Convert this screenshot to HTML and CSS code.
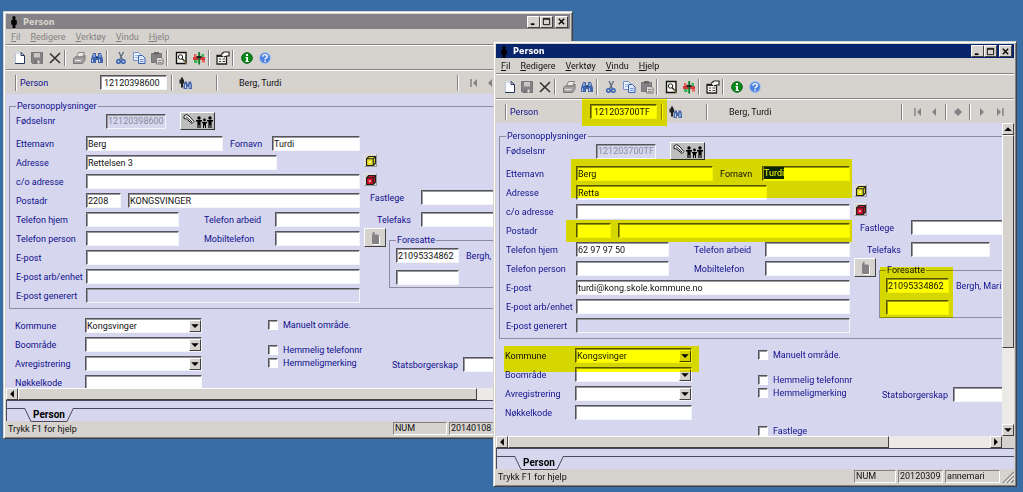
FILE: index.html
```html
<!DOCTYPE html>
<html lang="no">
<head>
<meta charset="utf-8">
<title>Person</title>
<link rel="stylesheet" href="styles.css">
</head>
<body>
<svg class="sprite" aria-hidden="true">
  <symbol id="i-man" viewBox="0 0 10 14"><path d="M5 1a2 2 0 0 1 1 3.600l2 1.400v4l-1.500 1v3h-3v-3l-1.500-1v-4l2-1.400A2 2 0 0 1 5 1z" fill="#000"/></symbol>
  <symbol id="i-new" viewBox="0 0 14 14"><path d="M3 1.500h6l3 3v8h-9z" fill="#fff"/><path d="M3.500 12V2H9" fill="none" stroke="#b8c4d8"/><path d="M3 12.500h9.500V4.500L9 1.500v3h3" fill="none" stroke="#24365c"/></symbol>
  <symbol id="i-save" viewBox="0 0 14 14"><path d="M1.500 1.500h11v11h-10l-1-1z" fill="#848284" stroke="#77757a"/><path d="M4 2h6v4.500H4z" fill="#c9c7c4"/><path d="M4 9h6v3.500H4z" fill="#77757a"/><path d="M7.500 9.500h2v3h-2z" fill="#e8e6e2"/></symbol>
  <symbol id="i-del" viewBox="0 0 14 14"><path d="M2 2.500l10 9.500M12 2L2 12" fill="none" stroke="#333" stroke-width="1.600"/></symbol>
  <symbol id="i-print" viewBox="0 0 14 14"><path d="M4.500 6l2-4.500h6L10.500 6z" fill="#ece9e4" stroke="#848284"/><path d="M1.500 7.500l2-1.500h8l1.500-2v5l-2.500 3.500h-9z" fill="#a5a3a2" stroke="#77757a"/><path d="M3 9.500h6" stroke="#eee"/></symbol>
  <symbol id="i-find" viewBox="0 0 14 14"><path d="M3 2h3v3h2V2h3l2 6v4H8V9H6v3H1V8z" fill="#4065ad"/><path d="M4 3v3M10 3v3M2.500 8.500v2.500M9.500 8.500v2.500" stroke="#c5d6f4"/><path d="M6 6.500h2" stroke="#18346c"/></symbol>
  <symbol id="i-cut" viewBox="0 0 14 14"><path d="M5 1l3.500 8M9.500 1L5.500 9" fill="none" stroke="#5d6980" stroke-width="1.300"/><circle cx="4.500" cy="10.500" r="1.800" fill="none" stroke="#2f5eb5" stroke-width="1.400"/><circle cx="9.300" cy="10.500" r="1.800" fill="none" stroke="#2f5eb5" stroke-width="1.400"/></symbol>
  <symbol id="i-copy" viewBox="0 0 14 14"><path d="M1.500 1.500h5l2 2v6h-7z" fill="#eaf1ff" stroke="#7590c8"/><path d="M3 4.500h3M3 6.500h3" stroke="#9db5e2"/><path d="M6.500 4.500h4l2.500 2.500v5.500H6.500z" fill="#dce8ff" stroke="#3c62ae"/><path d="M8 8.500h3.500M8 10.500h3.500" stroke="#6f91d2"/></symbol>
  <symbol id="i-paste" viewBox="0 0 14 14"><path d="M1.500 2.500h10v9h-10z" fill="#848284" stroke="#77757a"/><path d="M4 1h5v2.500H4z" fill="#666"/><path d="M6.500 6.500h4.500l2 2v4.500H6.500z" fill="#dedbd6" stroke="#77757a"/><path d="M8 9.500h3.500M8 11.500h3.500" stroke="#848284"/></symbol>
  <symbol id="i-view" viewBox="0 0 14 14"><path d="M2.500 1.500h9.500v11H2.500z" fill="#f8f8f0" stroke="#111" stroke-width="1.400"/><circle cx="6.500" cy="6" r="2.200" fill="#fff" stroke="#222"/><path d="M8 7.500l4.500 5" stroke="#222" stroke-width="1.400"/><path d="M9.500 9.500l3 3.500" stroke="#c9a94e"/></symbol>
  <symbol id="i-chart" viewBox="0 0 14 14"><path d="M1 6h12v3H1z" fill="#d33a3a"/><path d="M2 3h2.500v3H2zM10 9h3v2.500h-3z" fill="#e86060"/><path d="M2 9h3.500v3H2zM9.500 3H12v3H9.500z" fill="#3cb85a"/><path d="M7.200 1v12.500" stroke="#0c7a28" stroke-width="1.800"/><path d="M4.500 5h5v2h-5z" fill="#222"/></symbol>
  <symbol id="i-prop" viewBox="0 0 14 14"><path d="M1 4.500h9.500v8.500H1z" fill="#f4f2ec" stroke="#222" stroke-width="1.300"/><path d="M1 5.500h9.500" stroke="#222"/><path d="M3 8h2M3 10.500h2M6.500 8h2.500M6.500 10.500h2.500" stroke="#444"/><path d="M5 3.500L8 1h5v4h-2.500L8 6" fill="#fff" stroke="#222" stroke-width="1.200"/></symbol>
  <symbol id="i-info" viewBox="0 0 14 14"><circle cx="7" cy="7" r="5.300" fill="#078a18" stroke="#04600e"/><path d="M6 3h2v2H6zM5.500 6H8v4h1v1H5.500v-1H6.200V7h-.7z" fill="#fff"/></symbol>
  <symbol id="i-help" viewBox="0 0 14 14"><circle cx="7" cy="7" r="5.500" fill="#4d83df" stroke="#a9c3ee"/><path d="M4.800 5.600C5 3 9.500 3 9.200 5.600 9 7 7 6.800 7 8.500M7 9.500V11" fill="none" stroke="#fff" stroke-width="1.400"/></symbol>
  <symbol id="i-lookup" viewBox="0 0 14 14"><path d="M3 1.500h2v2h1v4H5v4H3v-4H1.500v-4H3z" fill="#222"/><path d="M6.500 5.500H9v2h1.500v-2H13l1 4v3.500h-3.500V11H9v2H5.500V9.500z" fill="#4968aa"/><path d="M7.500 8.500V12M12 8.500V12" stroke="#c7d6f3"/></symbol>
  <symbol id="i-family" viewBox="0 0 33 16"><path d="M3 3l2.500-1.500L8 3l5 5.500-2 2L5.500 6 3 5.500z" fill="#fff" stroke="#111"/><path d="M5 3.500l6 5.500" stroke="#111"/><g fill="#000"><circle cx="18" cy="5" r="1.700"/><circle cx="23.500" cy="7" r="1.400"/><circle cx="29" cy="5" r="1.700"/><path d="M15 7h6v1.500h-1.400V15h-1.200v-3h-.8v3h-1.200V8.500H15zM21 9h5v1.300h-1V15h-1v-2.500h-1V15h-1v-4.700h-1zM26 7h6v1.500h-1.400V15h-1.200v-3h-.8v3h-1.200V8.500H26z"/></g></symbol>
  <symbol id="i-cube" viewBox="1 1 9 9"><path d="M1.500 3.500l2-2h6v6l-2 2h-6z" fill="currentColor" stroke="#222"/><path d="M1.500 3.500h6v6M7.500 3.500l2-2" fill="none" stroke="#222"/><path d="M3.500 6.500h2" stroke="#fff"/></symbol>
  <symbol id="i-phone" viewBox="0 0 14 14"><path d="M4 4l1-3h1.500v2.500H10L11 5v8H5L4 12z" fill="#848284"/><path d="M11.500 5.500v8h-6" fill="none" stroke="#fff"/></symbol>
  <symbol id="i-first" viewBox="0 0 10 10"><path d="M2 1v8" stroke="#848284" stroke-width="1.500"/><path d="M8 1v8L4 5z" fill="#848284"/></symbol>
  <symbol id="i-prev" viewBox="0 0 10 10"><path d="M7 1v8L3 5z" fill="#848284"/></symbol>
  <symbol id="i-dia" viewBox="0 0 10 10"><path d="M5 1l4 4-4 4-4-4z" fill="#848284"/></symbol>
  <symbol id="i-next" viewBox="0 0 10 10"><path d="M3 1v8l4-4z" fill="#848284"/></symbol>
  <symbol id="i-last" viewBox="0 0 10 10"><path d="M2 1v8l4-4z" fill="#848284"/><path d="M8 1v8" stroke="#848284" stroke-width="1.500"/></symbol>
  <symbol id="i-min" viewBox="0 0 10 10"><path d="M2 8h4" stroke="#000" stroke-width="2"/></symbol>
  <symbol id="i-max" viewBox="0 0 10 10"><path d="M1.500 1.500h7v7h-7zM1.500 2.500h7" fill="none" stroke="#000"/></symbol>
  <symbol id="i-close" viewBox="0 0 10 10"><path d="M2 2l6 6M8 2L2 8" stroke="#000" stroke-width="1.500"/></symbol>
  <symbol id="i-left" viewBox="0 0 8 8"><path d="M5.500 1v6l-3-3z"/></symbol>
  <symbol id="i-right" viewBox="0 0 8 8"><path d="M2.500 1v6l3-3z"/></symbol>
  <symbol id="i-up" viewBox="0 0 8 8"><path d="M1 5.500h6l-3-3z"/></symbol>
  <symbol id="i-down" viewBox="0 0 8 8"><path d="M1 2.500h6l-3 3z"/></symbol>
  <symbol id="i-tab" viewBox="0 0 50 14"><path d="M.5 0L7 13.500H43L49.500 0" fill="#d6d6ef" stroke="#4a4a5a"/></symbol>
  <symbol id="i-grip" viewBox="0 0 12 12"><path d="M1 12L12 1M5 12l7-7M9 12l3-3" stroke="#848284" stroke-width="1.300"/><path d="M2.500 12L12 2.500M6.500 12L12 6.500" stroke="#fff"/></symbol>
</svg>

<main class="desktop">
  <section class="window window-back" aria-label="Person 12120398600">
    <header class="titlebar">
      <svg class="title-icon"><use href="#i-man"/></svg><h1>Person</h1>
      <button class="cap" aria-label="Minimer"><svg><use href="#i-min"/></svg></button><button class="cap" aria-label="Maksimer"><svg><use href="#i-max"/></svg></button><button class="cap cap-close" aria-label="Lukk"><svg><use href="#i-close"/></svg></button>
    </header>
    <nav class="menu"><button><u>F</u>il</button><button><u>R</u>edigere</button><button><u>V</u>erktøy</button><button><u>V</u>indu</button><button><u>H</u>jelp</button></nav>
    <div class="toolbar">
      <button aria-label="Ny"><svg><use href="#i-new"/></svg></button><button aria-label="Lagre"><svg><use href="#i-save"/></svg></button><button aria-label="Slett"><svg><use href="#i-del"/></svg></button><i></i><button aria-label="Skriv ut"><svg><use href="#i-print"/></svg></button><button aria-label="Søk"><svg><use href="#i-find"/></svg></button><i></i><button aria-label="Klipp ut"><svg><use href="#i-cut"/></svg></button><button aria-label="Kopier"><svg><use href="#i-copy"/></svg></button><button aria-label="Lim inn"><svg><use href="#i-paste"/></svg></button><i></i><button aria-label="Vis"><svg><use href="#i-view"/></svg></button><button aria-label="Graf"><svg><use href="#i-chart"/></svg></button><i></i><button aria-label="Egenskaper"><svg><use href="#i-prop"/></svg></button><i></i><button aria-label="Info"><svg><use href="#i-info"/></svg></button><button aria-label="Hjelp"><svg><use href="#i-help"/></svg></button>
    </div>
    <div class="personbar">
      <i></i><label for="a-id">Person</label><input class="field id-field" id="a-id" value="12120398600"><i></i>
      <button class="lookup" aria-label="Finn person"><svg><use href="#i-lookup"/></svg></button><i></i><span class="person-name">Berg, Turdi</span>
      <div class="recnav"><i></i><button aria-label="Første"><svg><use href="#i-first"/></svg></button><button aria-label="Forrige"><svg><use href="#i-prev"/></svg></button><i></i><button aria-label="Gjeldende"><svg><use href="#i-dia"/></svg></button><i></i><button aria-label="Neste"><svg><use href="#i-next"/></svg></button><button aria-label="Siste"><svg><use href="#i-last"/></svg></button></div>
    </div>
    <div class="view">
      <form class="form">
        <fieldset class="group">
          <legend>Personopplysninger</legend>
          <div class="columns">
            <div class="main-col">
              <div class="row row-first"><label for="a-fnr">Fødselsnr</label><input class="field fnr" id="a-fnr" value="12120398600" disabled><button type="button" class="family" aria-label="Familie"><svg><use href="#i-family"/></svg></button></div>
              <div class="row"><label for="a-en">Etternavn</label><input class="field surname" id="a-en" value="Berg"><label class="first-label" for="a-fn">Fornavn</label><input class="field grow" id="a-fn" value="Turdi"></div>
              <div class="row"><label for="a-ad">Adresse</label><input class="field address" id="a-ad" value="Rettelsen 3"></div>
              <div class="row"><label for="a-co">c/o adresse</label><input class="field grow" id="a-co"></div>
              <div class="row"><label for="a-pn">Postadr</label><input class="field zip" id="a-pn" value="2208"><input class="field grow" aria-label="Poststed" value="KONGSVINGER"></div>
              <div class="row"><label for="a-th">Telefon hjem</label><input class="field phone" id="a-th"><label class="phone-label" for="a-ta">Telefon arbeid</label><input class="field grow" id="a-ta"></div>
              <div class="row"><label for="a-tp">Telefon person</label><input class="field phone" id="a-tp"><label class="phone-label" for="a-mt">Mobiltelefon</label><input class="field grow" id="a-mt"></div>
              <div class="row"><label for="a-ep">E-post</label><input class="field grow" id="a-ep"></div>
              <div class="row"><label for="a-ea">E-post arb/enhet</label><input class="field grow" id="a-ea"></div>
              <div class="row"><label for="a-eg">E-post generert</label><input class="field grow" id="a-eg" disabled></div>
            </div>
            <div class="side-col">
              <button type="button" class="cube yellow" aria-label="Adressevalg"><svg><use href="#i-cube"/></svg></button>
              <button type="button" class="cube red" aria-label="c/o-valg"><svg><use href="#i-cube"/></svg></button>
              <div class="side-row"><label for="a-fl">Fastlege</label><input class="field doctor" id="a-fl"></div>
              <div class="side-row fax-row"><label for="a-tf">Telefaks</label><input class="field fax" id="a-tf"></div>
              <div class="guardian-row">
                <button type="button" class="call" aria-label="Ring"><svg><use href="#i-phone"/></svg></button>
                <fieldset class="group guardians"><legend>Foresatte</legend>
                  <div class="guardian"><input class="field" aria-label="Foresatt 1" value="21095334862"><span>Bergh,</span></div>
                  <div class="guardian"><input class="field" aria-label="Foresatt 2"></div>
                </fieldset>
              </div>
            </div>
          </div>
        </fieldset>
        <div class="lower">
          <div class="region-col">
            <div class="row"><label for="a-k">Kommune</label><span class="combo"><select class="field" id="a-k"><option>Kongsvinger</option></select><svg><use href="#i-down"/></svg></span></div>
            <div class="row"><label for="a-b">Boområde</label><span class="combo"><select class="field" id="a-b"><option></option></select><svg><use href="#i-down"/></svg></span></div>
            <div class="row"><label for="a-av">Avregistrering</label><span class="combo"><select class="field" id="a-av"><option></option></select><svg><use href="#i-down"/></svg></span></div>
            <div class="row"><label for="a-nk">Nøkkelkode</label><input class="field grow" id="a-nk"></div>
          </div>
          <div class="checks">
            <label><input type="checkbox">Manuelt område.</label>
            <label class="space-1"><input type="checkbox">Hemmelig telefonnr</label>
            <label><input type="checkbox">Hemmeligmerking</label>
          </div>
          <div class="citizen"><label for="a-sb">Statsborgerskap</label><input class="field" id="a-sb"></div>
        </div>
      </form>
      <div class="vscroll"><span class="knob"><svg><use href="#i-up"/></svg></span><span class="thumb"></span><span class="knob"><svg><use href="#i-down"/></svg></span></div>
    </div>
    <div class="hscroll"><span class="knob"><svg><use href="#i-left"/></svg></span><span class="track"><span class="thumb"></span></span><span class="knob"><svg><use href="#i-right"/></svg></span><span class="corner"></span></div>
    <div class="tabs"><button><svg><use href="#i-tab"/></svg><b>Person</b></button></div>
    <footer class="status"><span class="hint">Trykk F1 for hjelp</span><span class="panel">NUM</span><span class="panel">20140108</span><span class="panel"></span><svg class="grip"><use href="#i-grip"/></svg></footer>
  </section>

  <section class="window window-front" aria-label="Person 121203700TF">
    <header class="titlebar">
      <svg class="title-icon"><use href="#i-man"/></svg><h1>Person</h1>
      <button class="cap" aria-label="Minimer"><svg><use href="#i-min"/></svg></button><button class="cap" aria-label="Maksimer"><svg><use href="#i-max"/></svg></button><button class="cap cap-close" aria-label="Lukk"><svg><use href="#i-close"/></svg></button>
    </header>
    <nav class="menu"><button><u>F</u>il</button><button><u>R</u>edigere</button><button><u>V</u>erktøy</button><button><u>V</u>indu</button><button><u>H</u>jelp</button></nav>
    <div class="toolbar">
      <button aria-label="Ny"><svg><use href="#i-new"/></svg></button><button aria-label="Lagre"><svg><use href="#i-save"/></svg></button><button aria-label="Slett"><svg><use href="#i-del"/></svg></button><i></i><button aria-label="Skriv ut"><svg><use href="#i-print"/></svg></button><button aria-label="Søk"><svg><use href="#i-find"/></svg></button><i></i><button aria-label="Klipp ut"><svg><use href="#i-cut"/></svg></button><button aria-label="Kopier"><svg><use href="#i-copy"/></svg></button><button aria-label="Lim inn"><svg><use href="#i-paste"/></svg></button><i></i><button aria-label="Vis"><svg><use href="#i-view"/></svg></button><button aria-label="Graf"><svg><use href="#i-chart"/></svg></button><i></i><button aria-label="Egenskaper"><svg><use href="#i-prop"/></svg></button><i></i><button aria-label="Info"><svg><use href="#i-info"/></svg></button><button aria-label="Hjelp"><svg><use href="#i-help"/></svg></button>
    </div>
    <div class="personbar">
      <i></i><label for="b-id">Person</label><input class="field id-field" id="b-id" value="121203700TF"><i></i>
      <button class="lookup" aria-label="Finn person"><svg><use href="#i-lookup"/></svg></button><i></i><span class="person-name">Berg, Turdi</span>
      <div class="recnav"><i></i><button aria-label="Første"><svg><use href="#i-first"/></svg></button><button aria-label="Forrige"><svg><use href="#i-prev"/></svg></button><i></i><button aria-label="Gjeldende"><svg><use href="#i-dia"/></svg></button><i></i><button aria-label="Neste"><svg><use href="#i-next"/></svg></button><button aria-label="Siste"><svg><use href="#i-last"/></svg></button></div>
      <span class="mark mark-id"></span>
    </div>
    <div class="view">
      <form class="form">
        <fieldset class="group">
          <legend>Personopplysninger</legend>
          <div class="columns">
            <div class="main-col">
              <div class="row row-first"><label for="b-fnr">Fødselsnr</label><input class="field fnr" id="b-fnr" value="121203700TF" disabled><button type="button" class="family" aria-label="Familie"><svg><use href="#i-family"/></svg></button></div>
              <div class="row"><label for="b-en">Etternavn</label><input class="field surname" id="b-en" value="Berg"><span class="first-label">Fornavn</span><span class="field grow" role="textbox" contenteditable="true" aria-label="Fornavn"><span class="selected">Turdi</span></span><span class="mark mark-name"></span></div>
              <div class="row"><label for="b-ad">Adresse</label><input class="field address" id="b-ad" value="Retta"></div>
              <div class="row"><label for="b-co">c/o adresse</label><input class="field grow" id="b-co"></div>
              <div class="row"><label for="b-pn">Postadr</label><input class="field zip" id="b-pn"><input class="field grow" aria-label="Poststed"><span class="mark mark-post"></span></div>
              <div class="row"><label for="b-th">Telefon hjem</label><input class="field phone" id="b-th" value="62 97 97 50"><label class="phone-label" for="b-ta">Telefon arbeid</label><input class="field grow" id="b-ta"></div>
              <div class="row"><label for="b-tp">Telefon person</label><input class="field phone" id="b-tp"><label class="phone-label" for="b-mt">Mobiltelefon</label><input class="field grow" id="b-mt"></div>
              <div class="row"><label for="b-ep">E-post</label><input class="field grow" id="b-ep" value="turdi@kong.skole.kommune.no"></div>
              <div class="row"><label for="b-ea">E-post arb/enhet</label><input class="field grow" id="b-ea"></div>
              <div class="row"><label for="b-eg">E-post generert</label><input class="field grow" id="b-eg" disabled></div>
            </div>
            <div class="side-col">
              <button type="button" class="cube yellow" aria-label="Adressevalg"><svg><use href="#i-cube"/></svg></button>
              <button type="button" class="cube red" aria-label="c/o-valg"><svg><use href="#i-cube"/></svg></button>
              <div class="side-row"><label for="b-fl">Fastlege</label><input class="field doctor" id="b-fl"></div>
              <div class="side-row fax-row"><label for="b-tf">Telefaks</label><input class="field fax" id="b-tf"></div>
              <div class="guardian-row">
                <button type="button" class="call" aria-label="Ring"><svg><use href="#i-phone"/></svg></button>
                <fieldset class="group guardians"><legend>Foresatte</legend>
                  <div class="guardian"><input class="field" aria-label="Foresatt 1" value="21095334862"><span>Bergh, Mari</span></div>
                  <div class="guardian"><input class="field" aria-label="Foresatt 2"></div>
                </fieldset>
                <span class="mark mark-guardian"></span>
              </div>
            </div>
          </div>
        </fieldset>
        <div class="lower">
          <div class="region-col">
            <div class="row"><label for="b-k">Kommune</label><span class="combo"><select class="field" id="b-k"><option>Kongsvinger</option></select><svg><use href="#i-down"/></svg></span><span class="mark mark-region"></span></div>
            <div class="row"><label for="b-b">Boområde</label><span class="combo"><select class="field" id="b-b"><option></option></select><svg><use href="#i-down"/></svg></span></div>
            <div class="row"><label for="b-av">Avregistrering</label><span class="combo"><select class="field" id="b-av"><option></option></select><svg><use href="#i-down"/></svg></span></div>
            <div class="row"><label for="b-nk">Nøkkelkode</label><input class="field grow" id="b-nk"></div>
          </div>
          <div class="checks">
            <label><input type="checkbox">Manuelt område.</label>
            <label class="space-1"><input type="checkbox">Hemmelig telefonnr</label>
            <label><input type="checkbox">Hemmeligmerking</label>
            <label class="space-2"><input type="checkbox">Fastlege</label>
          </div>
          <div class="citizen"><label for="b-sb">Statsborgerskap</label><input class="field" id="b-sb"></div>
        </div>
      </form>
      <div class="vscroll"><span class="knob"><svg><use href="#i-up"/></svg></span><span class="thumb"></span><span class="knob"><svg><use href="#i-down"/></svg></span></div>
    </div>
    <div class="hscroll"><span class="knob"><svg><use href="#i-left"/></svg></span><span class="track"><span class="thumb"></span></span><span class="knob"><svg><use href="#i-right"/></svg></span><span class="corner"></span></div>
    <div class="tabs"><button><svg><use href="#i-tab"/></svg><b>Person</b></button></div>
    <footer class="status"><span class="hint">Trykk F1 for hjelp</span><span class="panel">NUM</span><span class="panel">20120309</span><span class="panel">annemari</span><svg class="grip"><use href="#i-grip"/></svg></footer>
  </section>
</main>
</body>
</html>
```
FILE: styles.css
```css
:root {
  --face: #d6d3ce;
  --form: #d6d6ef;
  --dark: #55535a;
  --shade: #848284;
  --navy: #10108c;
  --ui: Roboto, "Liberation Sans", sans-serif;
}
* { box-sizing: border-box; }
body { margin: 0; font: 9px/12px var(--ui); color: #111; }
button, input, select { font: inherit; color: inherit; margin: 0; }
button { padding: 0; border: 0; background: none; }
svg { display: block; flex: none; }
.sprite { position: absolute; width: 0; height: 0; }
.desktop { position: relative; height: 100vh; min-height: 460px; overflow: hidden; background: #396da5; }

.window {
  position: absolute; isolation: isolate; display: flex; flex-direction: column;
  background: var(--face); border: 1px solid; border-color: #d6d3ce #424142 #424142 #d6d3ce;
  box-shadow: inset 1px 1px #fff, inset -1px -1px var(--shade); padding: 2px;
}
.window-back { left: 3px; right: 44%; top: 11px; bottom: 53px; }
.window-front { left: 493px; right: 6px; top: 41px; bottom: 5px; }

.titlebar { display: flex; align-items: center; height: 15px; padding: 0 2px; background: var(--shade); color: #d6d3ce; }
.window-front .titlebar { height: 14px; background: #08246b; color: #fff; }
.title-icon { width: 10px; height: 13px; margin: 0 4px 0 1px; }
h1 { margin: 0 auto 0 0; font: bold 9px/12px "DejaVu Sans Condensed", "DejaVu Sans", sans-serif; }
.cap, .knob, .call, .cube {
  display: grid; place-items: center; background: var(--face);
  border: 1px solid; border-color: #fff #424142 #424142 #fff;
}
.cap { width: 13px; height: 12px; }
.cap svg { width: 9px; height: 9px; }
.cap-close { margin-left: 2px; }

.menu { display: flex; gap: 10px; height: 16px; padding-left: 5px; border-bottom: 1px solid var(--shade); }
.window-back .menu { color: var(--shade); }
.toolbar { display: flex; align-items: center; height: 25px; padding-left: 4px; border-top: 1px solid #fff; border-bottom: 1px solid var(--shade); }
.toolbar button { width: 18px; display: grid; place-items: center; }
.toolbar svg { width: 14px; height: 14px; }
.toolbar i { width: 6px; height: 16px; border-left: 1px solid var(--shade); box-shadow: inset 1px 0 #fff; }

.personbar { position: relative; display: flex; align-items: center; height: 24px; padding-left: 9px; border-top: 1px solid #fff; }
.personbar i { width: 2px; height: 16px; border-left: 1px solid var(--shade); background: #fff; }
.personbar label { width: 80px; padding-left: 3px; margin-right: 3px; color: var(--navy); }
.id-field { width: 67px; margin-right: 4px; }
.personbar .id-field { padding-left: 3px; }
.lookup { margin: 0 24px 0 5px; }
.lookup svg { width: 14px; height: 14px; }
.person-name { margin-left: 21px; }
.recnav { display: flex; align-items: center; gap: 6px; width: 113px; margin-left: auto; }
.recnav svg { width: 10px; height: 10px; }
.recnav i:first-child { margin-right: 4px; }
.recnav button:last-child { margin-left: 2px; }

.view { display: flex; flex: 1; min-height: 0; background: var(--form); }
.form { flex: 1; min-width: 0; overflow: hidden; padding: 6px 0 0 3px; color: var(--navy); white-space: nowrap; }
.window-front .form { padding-top: 7px; }
.group { min-width: 0; margin: 0 -9px 0 0; padding: 0 0 3px 6px; border: 1px solid #8c8c9c; }
legend { padding: 0 1px; line-height: 12px; }
.columns { display: flex; }
.main-col { flex: none; width: 344px; }
.row { position: relative; display: flex; align-items: center; height: 19px; }
.row > label:first-child { width: 70px; flex: none; }
.row-first { height: 18px; margin-bottom: 4px; }
.field {
  height: 15px; min-width: 0; padding: 0 1px; border: 1px solid; border-color: var(--dark) #f4f4fa #f4f4fa var(--dark);
  border-radius: 0; outline: 0; background: #fff; color: #111; box-shadow: inset 1px 1px #9a989e; line-height: 12px;
}
.field:disabled { background: var(--form); color: #8c8c9c; }
.grow { flex: 1; }
.fnr { width: 60px; margin-left: 20px; }
.family { width: 35px; height: 18px; margin-left: 14px; background: #bebebe; border: 1px solid; border-color: #fff #333 #333 #fff; }
.family svg { width: 33px; height: 16px; }
.surname { width: 137px; }
.first-label { width: 42px; margin-left: 7px; }
.address { width: 191px; }
.zip { width: 35px; margin-right: 7px; }
.phone { width: 93px; }
.phone-label { width: 71px; margin-left: 25px; }
.selected { display: inline-block; background: #08246b; color: #fff; }

.side-col { flex: 1; min-width: 0; padding: 42px 0 0 4px; }
.cube { width: 13px; height: 13px; border-color: #e8e6e2 #9a989e #9a989e #e8e6e2; margin-bottom: 6px; }
.cube svg { width: 10px; height: 10px; }
.yellow { color: #e8e020; }
.red { color: #d01028; margin-bottom: 4px; }
.side-row { display: flex; align-items: center; padding-left: 6px; margin-bottom: 7px; }
.side-row label { width: 51px; flex: none; }
.fax-row { padding-left: 13px; margin-bottom: 1px; }
.fax-row label { width: 44px; }
.doctor { width: 120px; flex: none; }
.fax { width: 79px; }
.guardian-row { position: relative; display: flex; align-items: flex-start; }
.call { width: 22px; height: 19px; flex: none; }
.call svg { width: 14px; height: 14px; }
.guardians { flex: 1; margin: 6px -9px 0 3px; padding: 2px 0 2px 6px; }
.guardian { display: flex; align-items: center; gap: 7px; }
.guardian + .guardian { margin-top: 7px; }
.guardian .field { width: 63px; flex: none; }

.lower { display: flex; align-items: flex-start; padding: 7px 0 0 6px; }
.region-col { flex: none; width: 187px; }
.combo { position: relative; flex: 1; display: flex; }
.combo select { appearance: none; width: 100%; }
.combo svg {
  position: absolute; right: 1px; top: 2px; width: 12px; height: 12px; pointer-events: none;
  background: var(--face); border: 1px solid; border-color: #fff #424142 #424142 #fff;
}
.checks { display: flex; flex-direction: column; width: 124px; flex: none; margin-left: 66px; padding-top: 2px; }
.checks label { display: flex; align-items: center; gap: 5px; height: 13px; }
.checks input { appearance: none; width: 10px; height: 10px; background: #fff; border: 1px solid; border-color: var(--dark) #fff #fff var(--dark); box-shadow: inset 1px 1px #9a989e; }
.checks .space-1 { margin-top: 12px; }
.checks .space-2 { margin-top: 25px; }
.citizen { display: flex; align-items: center; padding-top: 41px; }
.citizen label { width: 71px; flex: none; }
.citizen .field { width: 90px; flex: none; }

.vscroll { display: flex; flex-direction: column; width: 12px; background: #eceae6; }
.knob { width: 12px; height: 12px; flex: none; }
.knob svg { width: 10px; height: 10px; }
.thumb { display: block; background: var(--face); border: 1px solid; border-color: #fff #424142 #424142 #fff; }
.vscroll .thumb { height: 68%; margin-bottom: auto; }
.hscroll { display: flex; flex: none; height: 12px; background: #eceae6; }
.track { flex: 1; }
.track .thumb { height: 12px; width: 79%; }
.window-back .track .thumb { width: 87%; }
.corner { width: 12px; background: var(--face); }

.tabs { flex: none; height: 21px; padding-top: 7px; background: linear-gradient(#4a4a5a, #4a4a5a) 0 7px / 100% 1px no-repeat, var(--form); border-top: 1px solid #4a4a5a; border-left: 1px solid #4a4a5a; }
.tabs button { position: relative; display: block; width: 50px; height: 13px; margin-left: 17px; }
.tabs svg { position: absolute; inset: 0; width: 50px; height: 14px; }
.tabs b { position: relative; display: block; font: bold 10px/13px Roboto, "Liberation Sans", sans-serif; color: #000; }

.status { display: flex; flex: none; align-items: center; gap: 2px; height: 15px; padding-left: 2px; }
.hint { flex: 1; }
.panel { height: 13px; padding: 0 1px; border: 1px solid; border-color: var(--shade) #fff #fff var(--shade); line-height: 11px; }
.panel:nth-child(2) { width: 42px; }
.panel:nth-child(3) { width: 45px; }
.panel:nth-child(4) { width: 55px; }
.window-back .panel:nth-child(2) { width: 54px; }
.window-back .panel:nth-child(3) { width: 50px; }
.grip { width: 12px; height: 12px; }

.mark { position: absolute; z-index: 2; background: #ff0; mix-blend-mode: multiply; pointer-events: none; }
.mark-id { left: 86px; top: -1px; width: 85px; height: 27px; }
.mark-name { left: 65px; right: -2px; top: -5px; height: 39px; }
.mark-post { left: 60px; right: -2px; top: -1px; height: 22px; }
.mark-guardian { left: 26px; top: 9px; width: 73px; height: 51px; }
.mark-region { left: -1px; right: -7px; top: 0; height: 26px; }
```
